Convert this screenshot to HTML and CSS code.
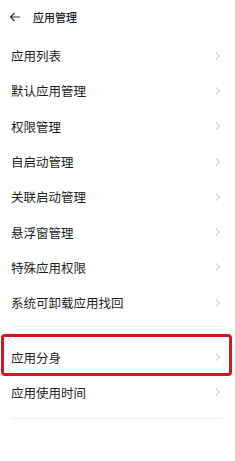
FILE: index.html
```html
<!DOCTYPE html>
<html lang="zh-CN">
<head>
    <meta charset="UTF-8">
    <title>应用管理</title>
    <link rel="stylesheet" href="styles.css">
</head>
<body>
    <div class="header">
        <svg class="back" width="12" height="10" viewBox="0 0 12 10">
            <path d="M11 5H1.5M5.5 1L1.5 5l4 4" fill="none" stroke="#333" stroke-width="1.2"/>
        </svg>
        <span class="title">应用管理</span>
    </div>

    <div class="group">
        <div class="row">应用列表<span class="chev"></span></div>
        <div class="row">默认应用管理<span class="chev"></span></div>
        <div class="row">权限管理<span class="chev"></span></div>
        <div class="row">自启动管理<span class="chev"></span></div>
        <div class="row">关联启动管理<span class="chev"></span></div>
        <div class="row">悬浮窗管理<span class="chev"></span></div>
        <div class="row">特殊应用权限<span class="chev"></span></div>
        <div class="row">系统可卸载应用找回<span class="chev"></span></div>
    </div>

    <div class="group second">
        <div class="row marked">应用分身<span class="chev"></span></div>
        <div class="row">应用使用时间<span class="chev"></span></div>
    </div>
</body>
</html>
```

FILE: styles.css
```css
body {
    margin: 0;
    background: #fff;
    font-family: "Noto Sans CJK SC", "Noto Sans", sans-serif;
    color: #1e1e1e;
}
.header {
    height: 38px;
    display: flex;
    align-items: center;
    padding-left: 9px;
    padding-bottom: 4px;
    box-sizing: border-box;
}
.back {
    margin-right: 12px;
}
.title {
    font-size: 11px;
    font-weight: 500;
}
.group {
    margin: 0 13px 0 11px;
    padding-bottom: 6px;
    border-bottom: 1px solid #eee;
}
.second {
    padding-top: 12px;
    padding-bottom: 8px;
}
.row {
    height: 35.3px;
    display: flex;
    align-items: center;
    justify-content: space-between;
    font-size: 12.5px;
    position: relative;
}
.chev {
    width: 5px;
    height: 5px;
    border-top: 1px solid #cccccc;
    border-right: 1px solid #cccccc;
    transform: rotate(45deg);
    margin-right: 3px;
}
.marked::after {
    content: "";
    position: absolute;
    top: -5px;
    bottom: -1px;
    left: -10px;
    right: -10px;
    border: 3px solid #d6161f;
    border-radius: 4px;
}
```
